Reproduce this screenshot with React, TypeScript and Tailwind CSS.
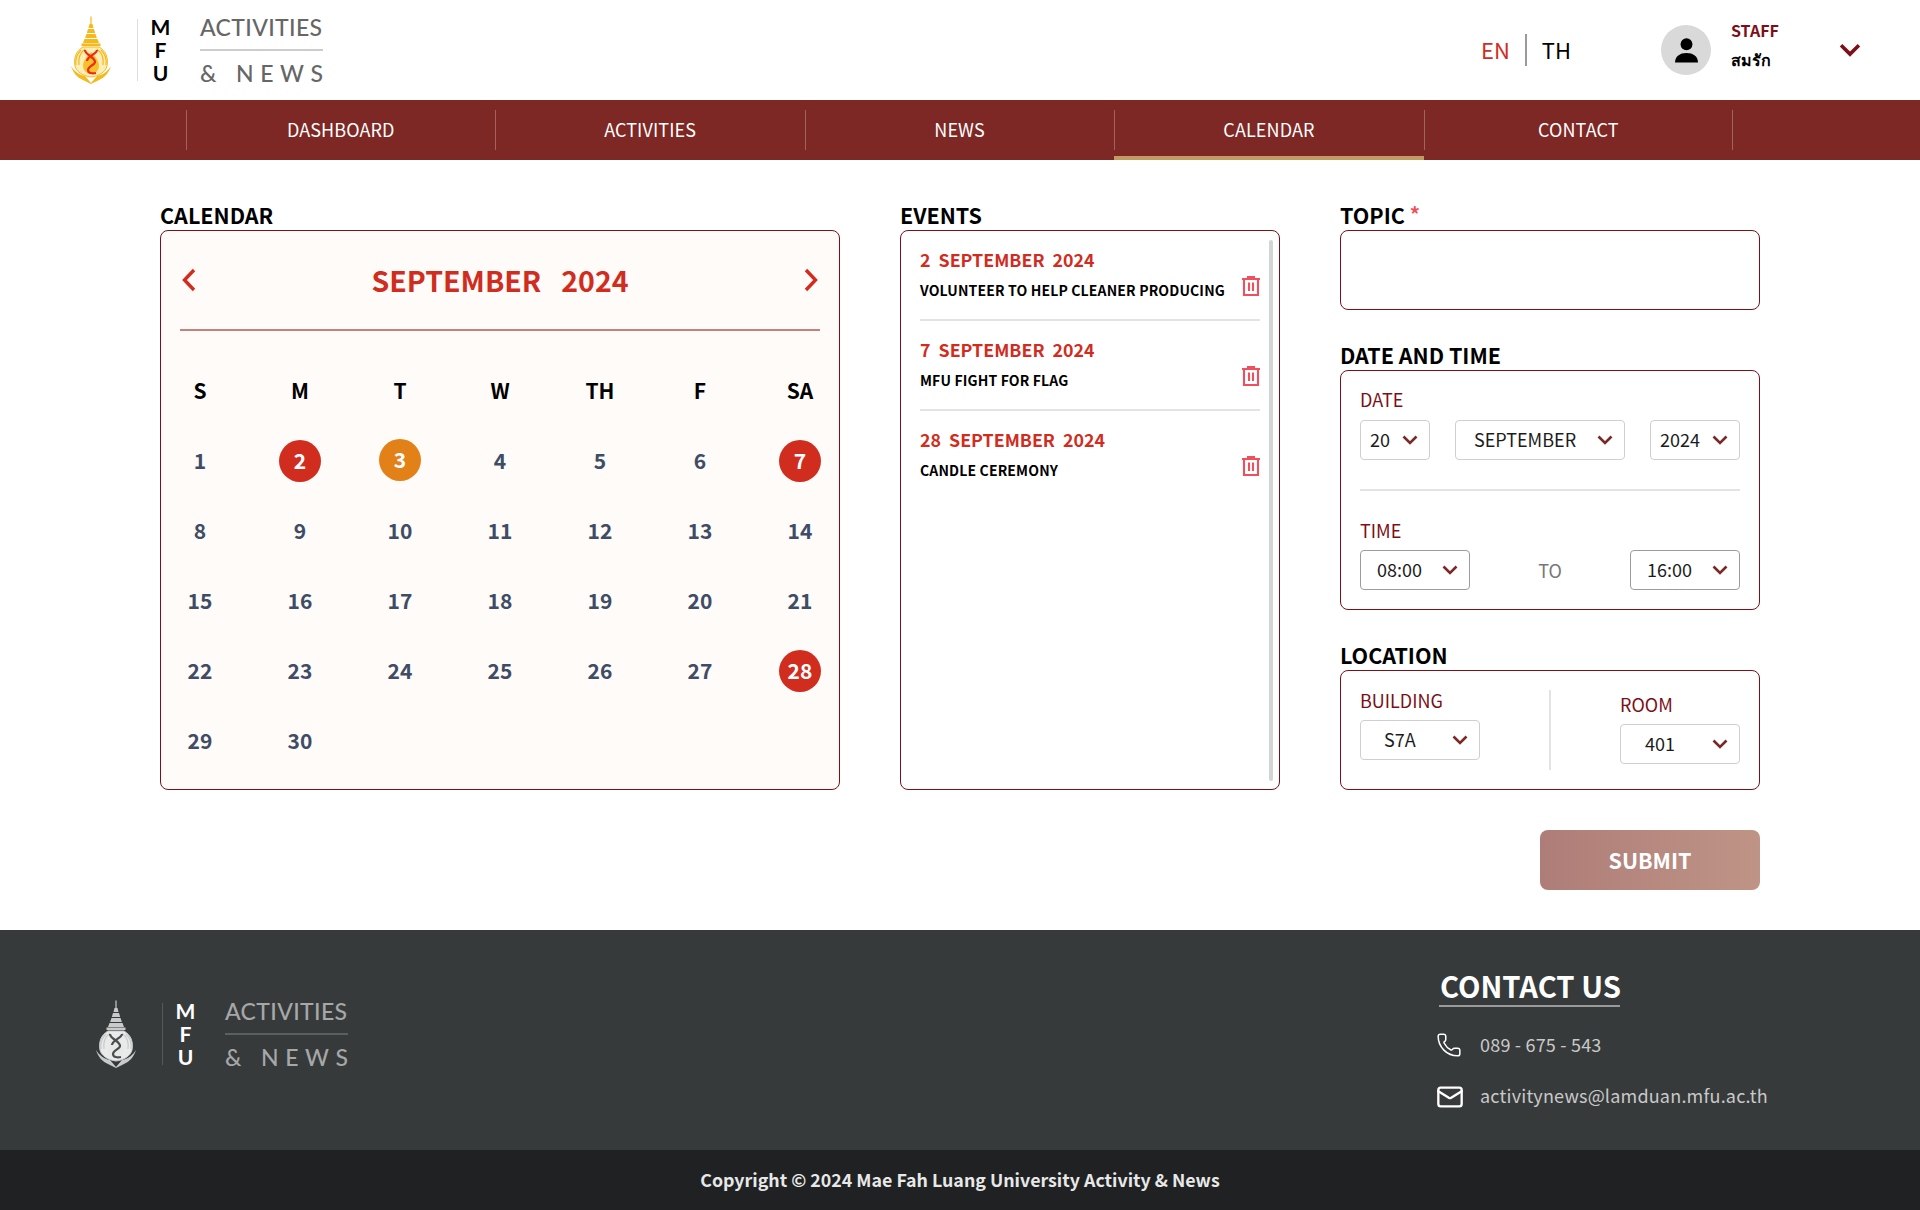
import { Mail, Phone } from 'lucide-react';

const FONT = '"Noto Sans CJK JP", "Noto Sans", sans-serif';

const navItems = ['DASHBOARD', 'ACTIVITIES', 'NEWS', 'CALENDAR', 'CONTACT'];
const weekDays = ['S', 'M', 'T', 'W', 'TH', 'F', 'SA'];
const events = [
    { date: '2', title: 'VOLUNTEER TO HELP CLEANER PRODUCING' },
    { date: '7', title: 'MFU FIGHT FOR FLAG' },
    { date: '28', title: 'CANDLE CEREMONY' },
];

// grid cells of September 2024, row by row
const days = Array.from({ length: 30 }, (_, i) => i + 1);

const Chevron = ({ className = 'w-[16px] h-[10px] text-[#7d2824]' }: { className?: string }) => (
    <svg viewBox="0 0 16 10" className={className} fill="none" stroke="currentColor" strokeWidth="2.600">
        <path d="M1.500 1.500 8 8l6.500-6.500" />
    </svg>
);

const Trash = () => (
    <svg viewBox="0 0 18 20" className="w-[18px] h-[20px] text-[#f0505c]" fill="none" stroke="currentColor" strokeWidth="2.100">
        <path d="M0 3h18M6 3V1h6v2M2 3v16h14V3M7 6.500v8.500M11 6.500v8.500" />
    </svg>
);

const Crest = ({ mono }: { mono?: boolean }) => {
    const main = mono ? '#c9cbcb' : '#f5b91e';
    const light = mono ? '#e9eaea' : '#fdeeb8';
    const core = mono ? '#e8e8e8' : '#f8c02c';
    const mark = mono ? '#4a4d4e' : '#ec2a17';
    return (
        <svg viewBox="0 0 40 68" className="w-[40px] h-[68px]" fill="none">
            <path d="M20 0.500v8" stroke={main} strokeWidth="1.200" />
            <path d="M18.500 8h3l1 4h-5zM17 13h6l1.200 4h-8.400zM15.500 18h9l1.400 4H14.100zM13.500 23h13l1.500 4H12z" fill={main} />
            <path d="M10.500 27.500h19v2.500h-19z" fill={main} />
            <path d="M12 31C5 35 2.500 42 4 50c1.500 6 8 10 16 11 8-1 14.500-5 16-11 1.500-8-1-15-8-19z" fill={light} stroke={main} strokeWidth="1" />
            <path d="M14 33c-5 4-7 10-6 16M26 33c5 4 7 10 6 16M10 34c-4 4-6 9-5 15M30 34c4 4 6 9 5 15" stroke={main} strokeWidth="1.200" />
            <path d="M20 36c5 5 8 9 8 14a8 8 0 0 1-16 0c0-5 3-9 8-14z" fill={core} />
            <path d="M14 34c0 5 10 7 10 12 0 3-7 4-7 8 0 3 4 4 8 3M26 34c0 4-10 6-10 11" stroke={mark} strokeWidth="2.200" />
            <path d="M0 50c3 5 8 9 14 10l6 7 6-7c6-1 11-5 14-10-2 7-7 12-12 14l-8 4-8-4C7 62 2 57 0 50z" fill={main} />
        </svg>
    );
};

const Logo = ({ footer }: { footer?: boolean }) => (
    <div className="flex items-center" style={{ fontFamily: 'Lato, sans-serif' }}>
        <Crest mono={footer} />
        <div className={footer ? 'ml-[26px] w-px h-[62px] bg-[#56595a]' : 'ml-[26px] w-px h-[62px] bg-[#dedede]'} />
        <div className={footer ? '-mt-px ml-[14px] w-[17px] flex flex-col items-center text-[21px] leading-[23px] font-bold text-white' : '-mt-px ml-[14px] w-[17px] flex flex-col items-center text-[21px] leading-[23px] font-bold text-black'}>
            <span>M</span>
            <span>F</span>
            <span>U</span>
        </div>
        <div className={footer ? 'ml-[31px] w-[123px] text-[#a5a7a8]' : 'ml-[31px] w-[123px] text-[#666666]'}>
            <div className="text-[23px] leading-[30px] tracking-[0.35px] font-medium whitespace-nowrap">ACTIVITIES</div>
            <div className={footer ? 'my-[7px] h-[2px] bg-[#5c5f60]' : 'my-[7px] h-[2px] bg-[#cccccc]'} />
            <div className="flex justify-between text-[23px] leading-[30px] font-medium">
                <span className="mr-[13px]">&amp;</span>
                <span>N</span>
                <span>E</span>
                <span>W</span>
                <span>S</span>
            </div>
        </div>
    </div>
);

const Select = ({ value, className }: { value: string; className: string }) => (
    <div className={`flex items-center justify-between h-[40px] bg-white rounded-[4px] border text-[18px] text-[#1c1c1c] ${className}`}>
        <span className="pb-[1px]">{value}</span>
        <Chevron />
    </div>
);

const SectionTitle = ({ children }: { children: React.ReactNode }) => (
    <h2 className="text-[21.5px] leading-[30px] font-bold text-black">{children}</h2>
);

const App = () => {
    return (
        <div className="w-[1920px] h-[1210px] bg-white flex flex-col overflow-hidden" style={{ fontFamily: FONT }}>
            <header className="h-[100px] flex items-center pl-[71px] pr-[59px]">
                <Logo />
                <div className="ml-auto flex items-center">
                    <span className="-mt-[2px] text-[22px] text-[#d02d1f]">EN</span>
                    <span className="ml-[15px] w-[2px] h-[32px] bg-[#9a9a9a]" />
                    <span className="-mt-[2px] ml-[15px] text-[22px] text-black">TH</span>
                    <div className="ml-[90px] w-[50px] h-[50px] rounded-full bg-[#d9d9d9] flex items-center justify-center">
                        <svg viewBox="0 0 24 26" className="w-[23px] h-[25px]" fill="#000">
                            <circle cx="12" cy="6.500" r="6.200" />
                            <path d="M0 25.500c0-6.500 5-10 12-10s12 3.500 12 10z" />
                        </svg>
                    </div>
                    <div className="ml-[20px] w-[108px] flex flex-col -mt-[11px]">
                        <span className="text-[16px] leading-[24px] font-bold text-[#7c0f17]">STAFF</span>
                        <span className="mt-[5px] text-[16px] leading-[24px] font-bold text-black">สมรัก</span>
                    </div>
                    <Chevron className="-mt-px w-[22px] h-[14px] text-[#7c0f17]" />
                </div>
            </header>

            <nav className="h-[60px] bg-[#7d2824] pl-[186px]">
                <div className="w-[1547px] h-full flex">
                    {navItems.map((item, i) => (
                        <div key={item} className="relative flex-1 flex items-center justify-center pb-[2px] text-[18px] tracking-[0.1px] text-white">
                            <span className="absolute left-0 top-[10px] h-[40px] w-px bg-[#a0645e]" />
                            {i === navItems.length - 1 && <span className="absolute right-0 top-[10px] h-[40px] w-px bg-[#a0645e]" />}
                            {item === 'CALENDAR' && <span className="absolute left-0 right-0 bottom-0 h-[4px] bg-[#c29a64]" />}
                            {item}
                        </div>
                    ))}
                </div>
            </nav>

            <main className="flex-1 px-[160px] pt-[40px]">
                <div className="flex gap-[60px]">
                    <section className="w-[680px]">
                        <SectionTitle>CALENDAR</SectionTitle>
                        <div className="h-[560px] rounded-[8px] border border-[#7c0f17] bg-[#fffbf8] px-[18px] pt-[25px]">
                            <div className="mx-px h-[75px] border-b-2 border-[#c9807a] flex justify-between text-[#d02d1f]">
                                <svg viewBox="0 0 14 24" className="ml-[2px] mt-[12px] w-[14px] h-[24px]" fill="none" stroke="currentColor" strokeWidth="3.400">
                                    <path d="M12 2 2.500 12 12 22" />
                                </svg>
                                <div className="flex gap-[20px] text-[28.5px] leading-[48px] font-bold">
                                    <span>SEPTEMBER</span>
                                    <span>2024</span>
                                </div>
                                <svg viewBox="0 0 14 24" className="mr-[2px] mt-[12px] w-[14px] h-[24px]" fill="none" stroke="currentColor" strokeWidth="3.400">
                                    <path d="M2 2l9.500 10L2 22" />
                                </svg>
                            </div>
                            <div className="mt-[39px] grid grid-cols-[repeat(7,42px)] justify-between auto-rows-[70px]">
                                {weekDays.map((d) => (
                                    <div key={d} className="h-[42px] flex items-center justify-center text-[21px] font-bold text-black">{d}</div>
                                ))}
                                {days.map((d) => {
                                    const style =
                                        d === 3
                                            ? 'bg-[#e38119] text-white rounded-full -mt-px'
                                            : d === 2 || d === 7 || d === 28
                                              ? 'bg-[#d02d1f] text-white rounded-full'
                                              : 'text-[#3e4c66]';
                                    return (
                                        <div key={d} className={`h-[42px] flex items-center justify-center text-[21px] font-bold ${style}`}>{d}</div>
                                    );
                                })}
                            </div>
                        </div>
                    </section>

                    <section className="w-[380px]">
                        <SectionTitle>EVENTS</SectionTitle>
                        <div className="relative h-[560px] rounded-[8px] border border-[#7c0f17] px-[19px]">
                            <span className="absolute right-[6px] top-[9px] bottom-[8px] w-[4px] rounded-full bg-[#d4d4d4]" />
                            {events.map((ev, i) => (
                                <div
                                    key={ev.date}
                                    className={i < events.length - 1 ? 'h-[90px] border-b-2 border-[#e3e3e3] flex items-center justify-between pb-[2px]' : 'h-[90px] flex items-center justify-between pb-[4px]'}
                                >
                                    <div>
                                        <div className="text-[17.8px] leading-[26px] font-bold text-[#d02d1f] whitespace-pre">{`${ev.date}  SEPTEMBER  2024`}</div>
                                        <div className="mt-[6px] text-[14px] leading-[24px] tracking-[0.15px] font-bold text-black whitespace-nowrap">{ev.title}</div>
                                    </div>
                                    <div className="mt-[24px]">
                                        <Trash />
                                    </div>
                                </div>
                            ))}
                        </div>
                    </section>

                    <section className="w-[420px]">
                        <SectionTitle>
                            TOPIC <span className="relative -top-[2px] text-[#f0505c] text-[20px] leading-none">*</span>
                        </SectionTitle>
                        <div className="h-[80px] rounded-[8px] border border-[#7c0f17]" />

                        <div className="mt-[30px]">
                            <SectionTitle>DATE AND TIME</SectionTitle>
                            <div className="h-[240px] rounded-[8px] border border-[#7c0f17] px-[19px] pt-[15px]">
                                <div className="text-[18px] leading-[26px] text-[#7c0f17]">DATE</div>
                                <div className="mt-[8px] flex justify-between">
                                    <Select value="20" className="w-[70px] pl-[9px] pr-[11px] border-[#cfcfcf]" />
                                    <Select value="SEPTEMBER" className="w-[170px] pl-[18px] pr-[11px] border-[#cfcfcf]" />
                                    <Select value="2024" className="w-[90px] pl-[9px] pr-[11px] border-[#cfcfcf]" />
                                </div>
                                <div className="mt-[29px] h-[2px] bg-[#e3e3e3]" />
                                <div className="mt-[26px] text-[18px] leading-[26px] text-[#7c0f17]">TIME</div>
                                <div className="mt-[7px] flex items-center justify-between">
                                    <Select value="08:00" className="w-[110px] pl-[16px] pr-[11px] border-[#9c9c9c]" />
                                    <span className="text-[18px] text-[#777777]">TO</span>
                                    <Select value="16:00" className="w-[110px] pl-[16px] pr-[11px] border-[#9c9c9c]" />
                                </div>
                            </div>
                        </div>

                        <div className="mt-[30px]">
                            <SectionTitle>LOCATION</SectionTitle>
                            <div className="h-[120px] rounded-[8px] border border-[#7c0f17] px-[19px] flex">
                                <div className="w-[189px] pt-[16px]">
                                    <div className="text-[18px] leading-[26px] text-[#7c0f17]">BUILDING</div>
                                    <Select value="S7A" className="mt-[7px] w-[120px] pl-[23px] pr-[11px] border-[#cfcfcf]" />
                                </div>
                                <div className="mt-[19px] h-[80px] w-[2px] bg-[#e3e3e3]" />
                                <div className="ml-auto pt-[20px]">
                                    <div className="text-[18px] leading-[26px] text-[#7c0f17]">ROOM</div>
                                    <Select value="401" className="mt-[7px] w-[120px] pl-[24px] pr-[11px] border-[#cfcfcf]" />
                                </div>
                            </div>
                        </div>
                    </section>
                </div>

                <div className="mt-[40px] flex justify-end">
                    <button className="w-[220px] h-[60px] rounded-[8px] bg-gradient-to-r from-[#ae7d78] to-[#bf9486] text-[21.5px] font-bold text-white">
                        SUBMIT
                    </button>
                </div>
            </main>

            <footer>
                <div className="h-[220px] bg-[#373a3b] flex pl-[96px] pr-[120px]">
                    <div className="pt-[66px]">
                        <Logo footer />
                    </div>
                    <div className="ml-auto w-[364px] pt-[35px]">
                        <div className="ml-[3px] w-[181px] border-b-2 border-[#9a9a9a] text-[29.2px] leading-[40px] pl-[1px] font-bold text-white whitespace-nowrap">CONTACT US</div>
                        <div className="mt-[24px] flex items-center text-[18px] tracking-[0.2px] text-[#c9c9c9]">
                            <Phone className="w-[26px] h-[26px] text-white" strokeWidth={1.400} />
                            <span className="ml-[18px]">089 - 675 - 543</span>
                        </div>
                        <div className="mt-[22px] flex items-center text-[18px] tracking-[0.2px] text-[#c9c9c9]">
                            <Mail className="mt-[3px] w-[28px] h-[28px] text-white" strokeWidth={2} />
                            <span className="ml-[16px]">activitynews@lamduan.mfu.ac.th</span>
                        </div>
                    </div>
                </div>
                <div className="h-[60px] pb-[2px] bg-[#1f2123] flex items-center justify-center text-[17.8px] font-bold text-[#e8e8e8]">
                    Copyright © 2024 Mae Fah Luang University Activity &amp; News
                </div>
            </footer>
        </div>
    );
};

export default App;
